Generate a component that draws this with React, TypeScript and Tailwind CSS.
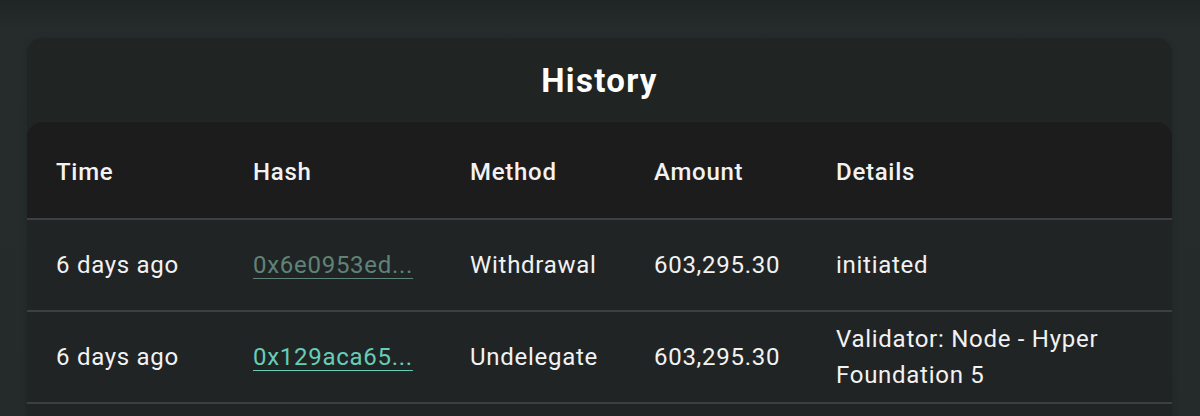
const rows = [
    { time: '6 days ago', hash: '0x6e0953ed...', visited: true, method: 'Withdrawal', amount: '603,295.30', details: 'initiated' },
    { time: '6 days ago', hash: '0x129aca65...', visited: false, method: 'Undelegate', amount: '603,295.30', details: 'Validator: Node - Hyper Foundation 5' },
];

const cols = 'grid grid-cols-[197px_217px_184px_182px_1fr]';

export default function App() {
    return (
        <div className="h-[416px] overflow-hidden bg-[linear-gradient(to_bottom,#1f2524_0px,#262c2c_28px,#252b2b_100%)] pl-[27px] pr-[28px] pt-[38px] font-['Roboto',sans-serif] text-[#f2f2f2]">
            <div className="rounded-t-[16px] bg-[#202422] shadow-[0_0_6px_rgba(0,0,0,0.15)]">
                <div className="flex h-[84px] items-center justify-center">
                    <h1 className="text-[33px] font-bold leading-none tracking-[0.04em] text-white">History</h1>
                </div>
                <div className="overflow-hidden rounded-t-[16px] bg-[#212424]">
                    <div className={`${cols} h-[98px] items-center border-b-2 border-[#3c4040] bg-[#1c1c1c] pt-[3px] text-[24px] font-medium tracking-[0.03em]`}>
                        <div className="pl-[29px]">Time</div>
                        <div className="pl-[29px]">Hash</div>
                        <div className="pl-[29px]">Method</div>
                        <div className="pl-[29px]">Amount</div>
                        <div className="pl-[29px]">Details</div>
                    </div>
                    {rows.map((r, i) => (
                        <div
                            key={i}
                            className={`${cols} h-[92px] items-center border-b-2 border-[#3c4040] text-[24px] leading-[36px] tracking-[0.03em]`}
                        >
                            <div className="pl-[29px]">{r.time}</div>
                            <div className="pl-[29px]">
                                <a
                                    href="#"
                                    className={
                                        r.visited
                                            ? 'text-[#5f8378] underline decoration-1 underline-offset-[5px]'
                                            : 'text-[#66cdb8] underline decoration-1 underline-offset-[5px]'
                                    }
                                >
                                    {r.hash}
                                </a>
                            </div>
                            <div className="pl-[29px]">{r.method}</div>
                            <div className="pl-[29px]">{r.amount}</div>
                            <div className="pl-[29px] pr-[29px]">{r.details}</div>
                        </div>
                    ))}
                    <div className="h-[40px]" />
                </div>
            </div>
        </div>
    );
}
